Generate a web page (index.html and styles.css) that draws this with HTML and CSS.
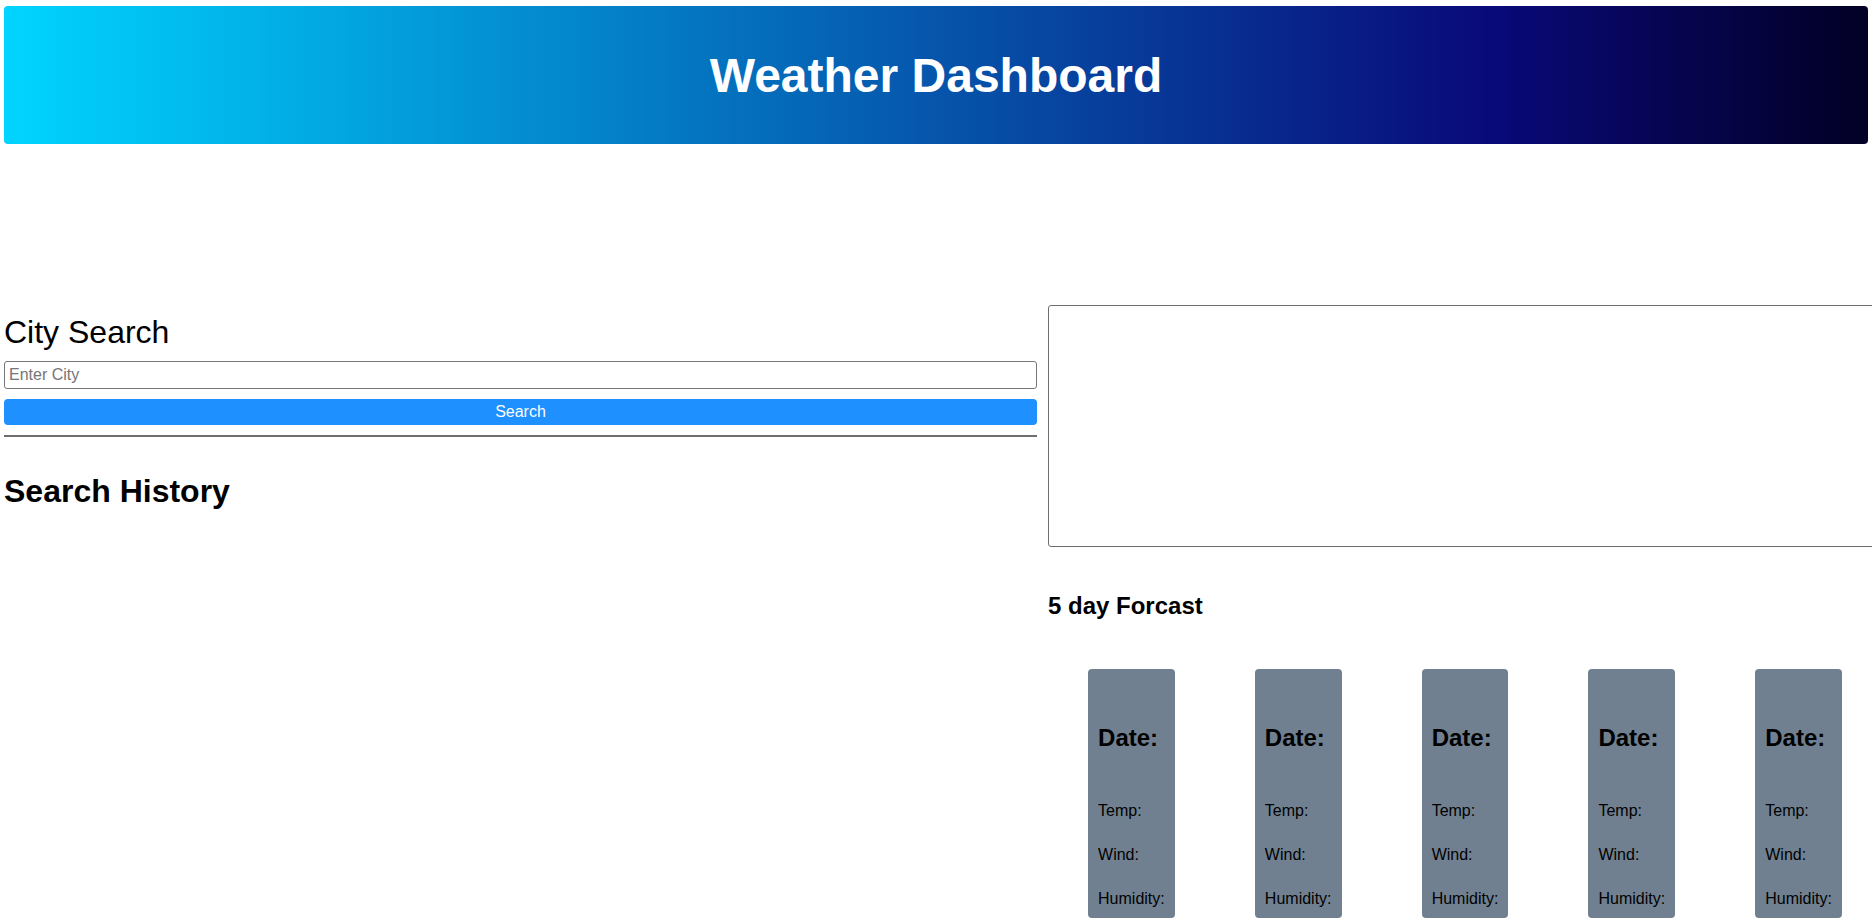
FILE: index.html
```html
<!DOCTYPE html>
<html lang="en">
<head>
<meta charset="utf-8">
<title>Weather Dashboard</title>
<link rel="stylesheet" href="styles.css">
</head>
<body>
<header class="hero">
  <h1 class="hero-title">Weather Dashboard</h1>
</header>
<main class="layout">
  <section class="search-col">
    <h2 class="search-title">City Search</h2>
    <input class="city-input" type="text" placeholder="Enter City">
    <button class="search-btn" type="button">Search</button>
    <hr class="divider">
    <h2 class="history-title">Search History</h2>
  </section>
  <section class="weather-col">
    <div class="current-box"></div>
    <h2 class="forecast-title">5 day Forcast</h2>
    <div class="forecast-row">
      <div class="card"><h3 class="card-date">Date:</h3><p class="card-line">Temp:</p><p class="card-line">Wind:</p><p class="card-line">Humidity:</p></div>
      <div class="card"><h3 class="card-date">Date:</h3><p class="card-line">Temp:</p><p class="card-line">Wind:</p><p class="card-line">Humidity:</p></div>
      <div class="card"><h3 class="card-date">Date:</h3><p class="card-line">Temp:</p><p class="card-line">Wind:</p><p class="card-line">Humidity:</p></div>
      <div class="card"><h3 class="card-date">Date:</h3><p class="card-line">Temp:</p><p class="card-line">Wind:</p><p class="card-line">Humidity:</p></div>
      <div class="card"><h3 class="card-date">Date:</h3><p class="card-line">Temp:</p><p class="card-line">Wind:</p><p class="card-line">Humidity:</p></div>
    </div>
  </section>
</main>
</body>
</html>
```

FILE: styles.css
```css
html {
  overflow: hidden;
}

body {
  margin: 0;
  font-family: "Liberation Sans", Arial, sans-serif;
  color: #000;
  background: #fff;
}

.hero {
  margin: 6px 4px 0;
  height: 138px;
  border-radius: 4px;
  background: linear-gradient(90deg, #00d4ff 0%, #090979 80%, #020024 100%);
  display: flex;
  align-items: center;
  justify-content: center;
}

.hero-title {
  margin: 0;
  font-size: 48px;
  line-height: 55px;
  font-weight: bold;
  color: #fff;
}

.layout {
  display: grid;
  grid-template-columns: 1033px 834px;
  column-gap: 11px;
  padding-left: 4px;
  margin-top: 161px;
  align-items: start;
}

.search-col {
  display: flex;
  flex-direction: column;
}

.search-title {
  margin: 9px 0 0;
  font-size: 32px;
  line-height: 37px;
  font-weight: normal;
}

.city-input {
  margin-top: 10px;
  height: 28px;
  box-sizing: border-box;
  border: 1px solid #767676;
  border-radius: 3px;
  padding: 0 4px;
  font-family: "Liberation Sans", Arial, sans-serif;
  font-size: 16px;
  color: #000;
}

.city-input::placeholder {
  color: #757575;
}

.search-btn {
  margin-top: 10px;
  height: 26px;
  border: none;
  border-radius: 4px;
  background: #1e90ff;
  color: #fff;
  font-family: "Liberation Sans", Arial, sans-serif;
  font-size: 16px;
  padding: 0;
}

.divider {
  margin: 10px 0 0;
  border: none;
  border-top: 2px solid #6e6e6e;
  height: 0;
}

.history-title {
  margin: 36px 0 0;
  font-size: 32px;
  line-height: 37px;
  font-weight: bold;
}

.weather-col {
  display: flex;
  flex-direction: column;
}

.current-box {
  height: 242px;
  box-sizing: border-box;
  border: 1px solid #6e6e6e;
  border-radius: 3px;
}

.forecast-title {
  margin: 45px 0 0;
  font-size: 24px;
  line-height: 28px;
  font-weight: bold;
}

.forecast-row {
  margin-top: 49px;
  display: flex;
  justify-content: space-around;
}

.card {
  background: #708090;
  border-radius: 4px;
  padding: 10px;
}

.card-date {
  margin: 45px 0 50px;
  font-size: 24px;
  line-height: 28px;
  font-weight: bold;
}

.card-line {
  margin: 0 0 26px;
  font-size: 16px;
  line-height: 18px;
}

.card-line:last-child {
  margin-bottom: 0;
}
```
